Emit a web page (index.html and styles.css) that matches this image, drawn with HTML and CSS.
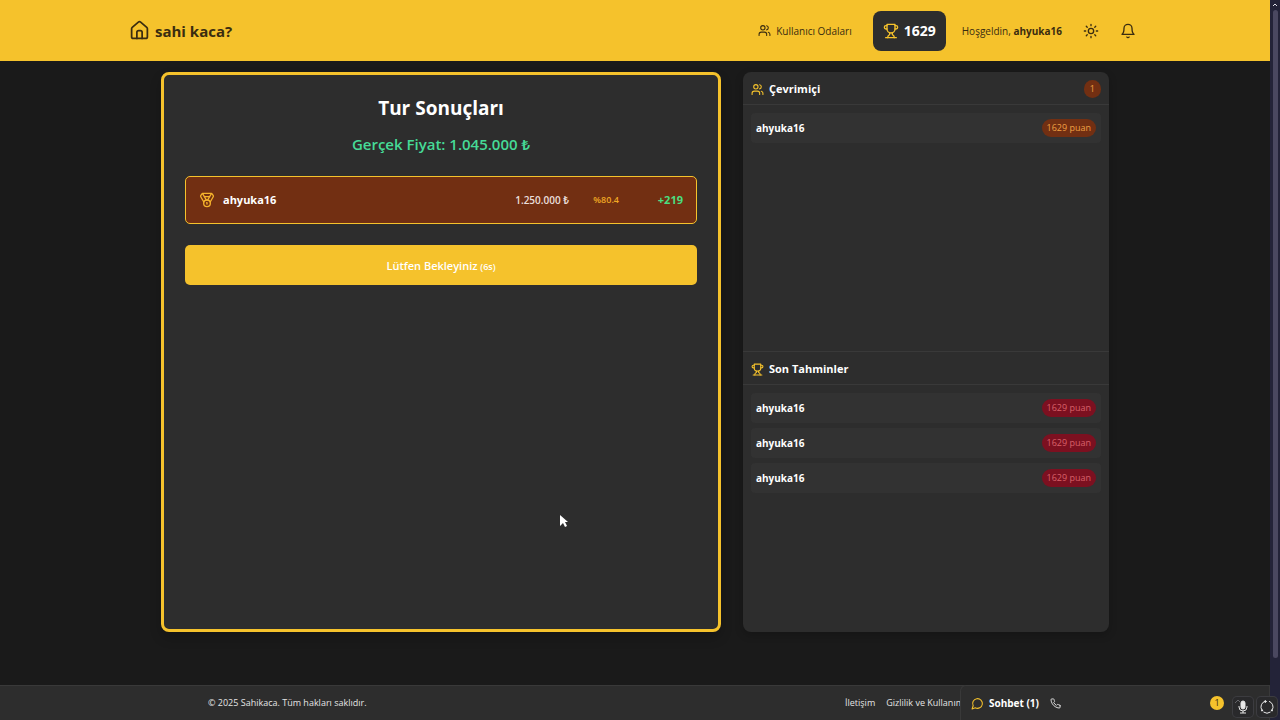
FILE: index.html
```html
<!DOCTYPE html>
<html lang="tr">
<head>
    <meta charset="UTF-8">
    <meta name="viewport" content="width=device-width, initial-scale=1.0">
    <title>sahi kaca?</title>
    <link rel="stylesheet" href="styles.css">
</head>
<body>
    <svg class="sprite" aria-hidden="true">
        <symbol id="icon-home" viewBox="0 0 24 24">
            <path d="M15 21v-7a2 2 0 0 0-2-2h-2a2 2 0 0 0-2 2v7"/>
            <path d="M3 10a2 2 0 0 1 .709-1.528l7-5.999a2 2 0 0 1 2.582 0l7 5.999A2 2 0 0 1 21 10v9a2 2 0 0 1-2 2H5a2 2 0 0 1-2-2z"/>
        </symbol>
        <symbol id="icon-users" viewBox="0 0 24 24">
            <path d="M16 21v-2a4 4 0 0 0-4-4H6a4 4 0 0 0-4 4v2"/>
            <circle cx="9" cy="7" r="4"/>
            <path d="M22 21v-2a4 4 0 0 0-3-3.87M16 3.13a4 4 0 0 1 0 7.75"/>
        </symbol>
        <symbol id="icon-trophy" viewBox="0 0 24 24">
            <path d="M6 9H4.500a2.500 2.500 0 0 1 0-5H6M18 9h1.500a2.500 2.500 0 0 0 0-5H18M4 22h16"/>
            <path d="M10 14.660V17c0 .550-.470.980-.970 1.210C7.850 18.750 7 20.240 7 22M14 14.660V17c0 .550.470.980.970 1.210C16.150 18.750 17 20.240 17 22"/>
            <path d="M18 2H6v7a6 6 0 0 0 12 0V2Z"/>
        </symbol>
        <symbol id="icon-medal" viewBox="0 0 24 24">
            <path d="M7.210 15 2.660 7.140a2 2 0 0 1 .130-2.200L4.400 2.800A2 2 0 0 1 6 2h12a2 2 0 0 1 1.600.800l1.600 2.140a2 2 0 0 1 .140 2.200L16.790 15"/>
            <path d="M11 12 5.120 2.200M13 12l5.880-9.800M8 7h8"/>
            <circle cx="12" cy="17" r="5"/>
            <path d="M12 18v-2h-.500"/>
        </symbol>
        <symbol id="icon-sun" viewBox="0 0 24 24">
            <circle cx="12" cy="12" r="4"/>
            <path d="M12 2v2M12 20v2M4.930 4.930l1.410 1.410M17.660 17.660l1.410 1.410M2 12h2M20 12h2M6.340 17.660l-1.410 1.410M19.070 4.930l-1.410 1.410"/>
        </symbol>
        <symbol id="icon-bell" viewBox="0 0 24 24">
            <path d="M6 8a6 6 0 0 1 12 0c0 7 3 9 3 9H3s3-2 3-9M10.300 21a1.940 1.940 0 0 0 3.400 0"/>
        </symbol>
        <symbol id="icon-chat" viewBox="0 0 24 24">
            <path d="M7.900 20A9 9 0 1 0 4 16.100L2 22Z"/>
        </symbol>
        <symbol id="icon-phone" viewBox="0 0 24 24">
            <path d="M22 16.920v3a2 2 0 0 1-2.180 2 19.790 19.790 0 0 1-8.630-3.070 19.500 19.500 0 0 1-6-6 19.790 19.790 0 0 1-3.070-8.670A2 2 0 0 1 4.110 2h3a2 2 0 0 1 2 1.720 12.840 12.840 0 0 0 .700 2.810 2 2 0 0 1-.450 2.110L8.090 9.910a16 16 0 0 0 6 6l1.270-1.270a2 2 0 0 1 2.110-.450 12.840 12.840 0 0 0 2.810.700A2 2 0 0 1 22 16.920z"/>
        </symbol>
    </svg>

    <header class="header">
        <div class="header-inner">
            <a href="#" class="logo">
                <svg class="icon icon-lg"><use href="#icon-home"/></svg>
                sahi kaca?
            </a>
            <nav class="nav">
                <a href="#" class="nav-link">
                    <svg class="icon icon-sm"><use href="#icon-users"/></svg>
                    Kullanıcı Odaları
                </a>
                <div class="score">
                    <svg class="icon icon-md"><use href="#icon-trophy"/></svg>
                    1629
                </div>
                <span class="welcome">Hoşgeldin, <strong>ahyuka16</strong></span>
                <button class="icon-btn" aria-label="Tema"><svg class="icon icon-md"><use href="#icon-sun"/></svg></button>
                <button class="icon-btn" aria-label="Bildirimler"><svg class="icon icon-md"><use href="#icon-bell"/></svg></button>
            </nav>
        </div>
    </header>

    <main class="main">
        <section class="results">
            <h1>Tur Sonuçları</h1>
            <p class="real-price">Gerçek Fiyat: 1.045.000 ₺</p>
            <div class="result-row">
                <svg class="icon icon-md"><use href="#icon-medal"/></svg>
                <span class="result-name">ahyuka16</span>
                <span class="result-guess">1.250.000 ₺</span>
                <span class="result-rate">%80.4</span>
                <span class="result-gain">+219</span>
            </div>
            <button class="wait-btn">Lütfen Bekleyiniz <small>(6s)</small></button>
        </section>

        <aside class="sidebar">
            <section class="side-section">
                <div class="side-header">
                    <svg class="icon icon-sm"><use href="#icon-users"/></svg>
                    <h2>Çevrimiçi</h2>
                    <span class="badge badge-count">1</span>
                </div>
                <ul class="user-list">
                    <li>ahyuka16 <span class="badge">1629 puan</span></li>
                </ul>
            </section>
            <section class="side-section">
                <div class="side-header">
                    <svg class="icon icon-sm"><use href="#icon-trophy"/></svg>
                    <h2>Son Tahminler</h2>
                </div>
                <ul class="user-list">
                    <li>ahyuka16 <span class="badge badge-red">1629 puan</span></li>
                    <li>ahyuka16 <span class="badge badge-red">1629 puan</span></li>
                    <li>ahyuka16 <span class="badge badge-red">1629 puan</span></li>
                </ul>
            </section>
        </aside>
    </main>

    <footer class="footer">
        <div class="footer-inner">
            <span>© 2025 Sahikaca. Tüm hakları saklıdır.</span>
            <div class="footer-links">
                <a href="#">İletişim</a>
                <a href="#">Gizlilik ve Kullanım</a>
            </div>
        </div>
    </footer>

    <div class="chat">
        <svg class="icon icon-sm chat-icon"><use href="#icon-chat"/></svg>
        <strong>Sohbet (1)</strong>
        <button class="icon-btn" aria-label="Ara"><svg class="icon icon-xs"><use href="#icon-phone"/></svg></button>
        <span class="chat-count">1</span>
    </div>

    <div class="scrollbar">
        <svg class="scroll-arrow" viewBox="0 0 10 10"><path d="M3 6l2-2 2 2"/></svg>
        <div class="scroll-thumb"></div>
    </div>

    <div class="overlay-tools">
        <button aria-label="Mikrofon">
            <svg viewBox="0 0 20 20">
                <path class="fill" d="M8 6a2 2 0 0 1 4 0v4a2 2 0 0 1-4 0z"/>
                <path d="M6 9v1a4 4 0 0 0 8 0V9M10 14v2M7 16h6"/>
                <path class="faint" d="M2 6l3-3 2 2"/>
            </svg>
        </button>
        <button aria-label="Yenile">
            <svg viewBox="0 0 20 20">
                <path d="M8 4.300a6 6 0 0 0-3.300 8.500M6.500 15a6 6 0 0 0 7 0M15.300 12.800a6 6 0 0 0-3.300-8.500"/>
                <path class="fill" d="M8 3.500l1.500 1-1.500 1zM4.500 13l1.500 0-1 1.200zM15.500 13l-1.500 0 1 1.200z"/>
            </svg>
        </button>
    </div>

    <svg class="cursor" viewBox="0 0 10 14"><path d="M1 1v11l3-3 2 4 2-1-2-4h3z"/></svg>
</body>
</html>
```

FILE: styles.css
```css
* {
    box-sizing: border-box;
}

body {
    margin: 0;
    padding-right: 10px;
    min-height: 100vh;
    display: flex;
    flex-direction: column;
    background: #1a1a1a;
    color: #fff;
    font-family: "Segoe UI", "Open Sans", "Noto Sans", sans-serif;
    font-size: 10px;
    line-height: 16px;
}

h1, h2, p, ul {
    margin: 0;
    padding: 0;
}

a {
    color: inherit;
    text-decoration: none;
}

button {
    font-family: inherit;
    color: inherit;
    border: none;
    cursor: pointer;
}

.sprite {
    position: absolute;
    width: 0;
    height: 0;
}

/* Icons */
.icon {
    flex: none;
    fill: none;
    stroke: currentColor;
    stroke-width: 2;
    stroke-linecap: round;
    stroke-linejoin: round;
}

.icon-xs {
    width: 11px;
    height: 11px;
}

.icon-sm {
    width: 13px;
    height: 13px;
}

.icon-md {
    width: 16px;
    height: 16px;
}

.icon-lg {
    width: 21px;
    height: 21px;
}

.icon-btn {
    display: flex;
    padding: 0;
    background: none;
}

/* Header */
.header {
    background: #f5c22c;
    color: #3a2c10;
}

.header-inner {
    display: flex;
    align-items: center;
    justify-content: space-between;
    max-width: 1014px;
    height: 61px;
    margin: 0 auto;
    padding: 0 1px;
}

.logo {
    display: flex;
    align-items: center;
    gap: 5px;
    font-size: 15px;
    font-weight: 700;
}

.nav {
    display: flex;
    align-items: center;
}

.nav-link {
    display: flex;
    align-items: center;
    gap: 5px;
    margin-right: 21px;
}

.score {
    display: flex;
    align-items: center;
    gap: 5px;
    height: 40px;
    padding: 0 10px;
    margin-right: 16px;
    border-radius: 8px;
    background: #2d2d2d;
    color: #fff;
    font-size: 14px;
    font-weight: 700;
}

.score .icon,
.side-header .icon,
.chat-icon {
    color: #f5c22c;
}

.nav .icon-btn {
    margin-left: 21px;
}

.nav .icon-btn:last-child {
    margin-right: 5px;
}

/* Main */
.main {
    display: grid;
    grid-template-columns: minmax(0, 560fr) minmax(0, 366fr);
    gap: 22px;
    width: 100%;
    max-width: 948px;
    min-height: 560px;
    margin: 11px auto 53px;
}

.results {
    padding: 20px 21px;
    border: 3px solid #f5c22c;
    border-radius: 8px;
    background: #2d2d2d;
    box-shadow: 0 6px 12px rgba(0, 0, 0, 0.2);
    text-align: center;
}

.results h1 {
    font-size: 19px;
    line-height: 27px;
}

.real-price {
    margin-top: 10px;
    color: #46db97;
    font-size: 15px;
    font-weight: 600;
    line-height: 24px;
}

.result-row {
    display: flex;
    align-items: center;
    height: 48px;
    margin-top: 20px;
    padding: 0 13px;
    border: 1px solid #f5c22c;
    border-radius: 5px;
    background: #722f12;
    font-weight: 600;
}

.result-row .icon {
    color: #f5b32c;
}

.result-name {
    margin-left: 8px;
    margin-right: auto;
    font-size: 11px;
    font-weight: 700;
}

.result-guess {
    color: #eadfdb;
    font-size: 10px;
}

.result-rate {
    width: 50px;
    color: #f0a824;
    font-size: 9px;
    text-align: right;
}

.result-gain {
    width: 64px;
    color: #4ade80;
    font-size: 11px;
    font-weight: 700;
    text-align: right;
}

.wait-btn {
    display: block;
    width: 100%;
    height: 40px;
    margin-top: 21px;
    border-radius: 5px;
    background: #f5c22c;
    font-size: 11px;
    font-weight: 600;
}

.wait-btn small {
    font-size: 9px;
}

/* Sidebar */
.sidebar {
    display: grid;
    grid-template-rows: 1fr 1fr;
    border-radius: 8px;
    background: #2d2d2d;
    box-shadow: 0 3px 8px rgba(0, 0, 0, 0.2);
}

.side-section + .side-section {
    margin-top: -1px;
    border-top: 1px solid #393939;
}

.side-header {
    display: flex;
    align-items: center;
    gap: 5px;
    height: 33px;
    padding: 2px 8px 0;
    border-bottom: 1px solid #393939;
}

.side-header h2 {
    margin-right: auto;
    font-size: 11px;
    font-weight: 700;
}

.user-list {
    display: grid;
    gap: 5px;
    padding: 8px;
    list-style: none;
}

.user-list li {
    display: flex;
    align-items: center;
    justify-content: space-between;
    height: 30px;
    padding: 0 5px;
    border-radius: 4px;
    background: #323232;
    font-weight: 700;
}

.badge {
    padding: 1px 5px;
    border-radius: 9px;
    background: #722f12;
    color: #f0a044;
    font-size: 9px;
    font-weight: 400;
}

.badge-count {
    padding: 1px 6px;
}

.badge-red {
    background: #7c1020;
    color: #d9606a;
}

/* Footer */
.footer {
    flex: 1;
    border-top: 1px solid #393939;
    background: #2d2d2d;
    color: #e4e4e4;
    font-size: 9px;
}

.footer-inner {
    display: flex;
    align-items: center;
    justify-content: space-between;
    max-width: 854px;
    height: 34px;
    margin: 0 auto;
}

.footer-links {
    display: flex;
    gap: 11px;
    min-width: 217px;
}

/* Chat bar */
.chat {
    position: fixed;
    right: 10px;
    bottom: 0;
    display: flex;
    align-items: center;
    gap: 5px;
    width: 310px;
    height: 35px;
    padding: 0 45px 0 10px;
    border: 1px solid #393939;
    border-bottom: none;
    border-radius: 6px 0 0 0;
    background: #2d2d2d;
}

.chat .icon-btn {
    margin-left: 6px;
    color: #e4e4e4;
}

.chat-count {
    width: 14px;
    margin-left: auto;
    border-radius: 7px;
    background: #f5c22c;
    color: #3a2c10;
    font-size: 9px;
    line-height: 14px;
    text-align: center;
}

.scrollbar {
    position: fixed;
    top: 0;
    right: 0;
    bottom: 0;
    width: 10px;
    background: #232338;
}

.scroll-arrow {
    display: block;
    width: 10px;
    height: 10px;
    fill: none;
    stroke: #e0e0e8;
}

.scroll-thumb {
    width: 5px;
    height: 90%;
    margin: 0 auto;
    border-radius: 3px;
    background: #4a4860;
}

.overlay-tools {
    position: fixed;
    right: 3px;
    bottom: 3px;
    display: flex;
    gap: 4px;
}

.overlay-tools button {
    width: 20px;
    height: 20px;
    padding: 0;
    border-radius: 4px;
    background: #29292b;
    box-shadow: 0 0 0 1px #3c3c40;
}

.overlay-tools svg {
    display: block;
    fill: none;
    stroke: #e8e8e8;
}

.overlay-tools .fill {
    fill: #e8e8e8;
}

.overlay-tools .faint {
    stroke: #66666a;
}

.cursor {
    position: fixed;
    top: 514px;
    left: 559px;
    width: 10px;
    height: 14px;
    fill: #fff;
}
```
